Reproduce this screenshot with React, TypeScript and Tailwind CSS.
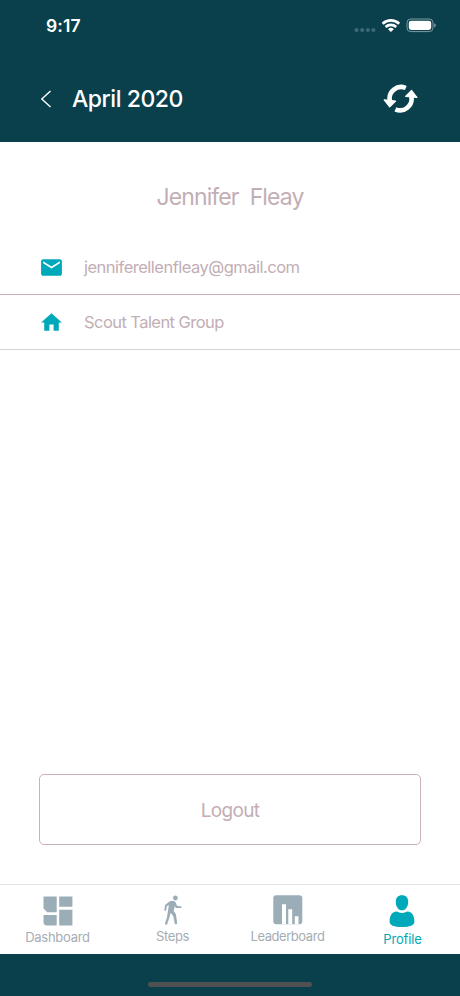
import { MdEmail, MdHome } from "react-icons/md";

function StatusIcons() {
    return (
        <svg width="84" height="20" viewBox="0 0 84 20" fill="none">
            <g fill="#3b6975">
                <circle cx="4.5" cy="14" r="2.1" />
                <circle cx="10.2" cy="14" r="2.1" />
                <circle cx="15.9" cy="14" r="2.1" />
                <circle cx="21.4" cy="14" r="2.1" />
            </g>
            <g stroke="#fff" strokeWidth="2.7">
                <path d="M30.6 7.7a12.2 12.2 0 0 1 16.6 0" />
                <path d="M33.6 11a7.8 7.8 0 0 1 10.6 0" />
            </g>
            <path fill="#fff" d="M36 13.2a4.2 4.2 0 0 1 5.8 0l-2.9 2.9z" />
            <rect x="55" y="3" width="26" height="12.6" rx="3.8" stroke="#7f9ba3" />
            <rect x="56.8" y="4.7" width="22.4" height="9.2" rx="2.3" fill="#fff" />
            <path fill="#7f9ba3" d="M82.2 7.2q1.6.6 1.6 2.1t-1.6 2.1z" />
        </svg>
    );
}

function SyncIcon() {
    return (
        <svg width="36" height="30" viewBox="0 0 36 30" fill="none">
            <g stroke="#fff" strokeWidth="4.6">
                <path d="M22.8 4A11.5 11.5 0 0 0 6.9 17" />
                <path d="M12.4 25.3A11.5 11.5 0 0 0 28.3 12.3" />
            </g>
            <g fill="#fff" stroke="#fff" strokeWidth="1.2" strokeLinejoin="round">
                <path d="M1.2 15.8l11.4 1.2-5.9 5.9z" />
                <path d="M34 13.5l-11.4-1.2 5.9-5.9z" />
            </g>
        </svg>
    );
}

function DashboardIcon() {
    return (
        <svg width="30" height="30" viewBox="0 0 30 30" fill="#9badb7">
            <path d="M.5.500h13.200v15.700H4.200L.5 12.500zM16.200.5h13.200v10.300H16.200zM.5 19h13.200v10.400H3.800Q.5 29.400.5 26zM16.200 13.700h13.200v15.700H16.200z" />
        </svg>
    );
}

function StepsIcon() {
    return (
        <svg width="18" height="30" viewBox="0 0 18 30" fill="#9badb7">
            <circle cx="11.4" cy="3" r="2.4" />
            <path d="M5.5 6.5q2.6-1.3 4.9-.3 1 .5 1.5 1.8l1.2 3 4 .3q.7.8 0 1.7l-5.2-.1-1.2-2-1 5.200 2.200 3.100 1.300 9-.7 1.100q-1.400.3-1.800-.8l-1.500-7.600-2.600-3.100-1 4.200-2.400 7.300q-1.200.9-2.300-.2l.2-1.200 1.900-5.700 1.500-9.800.2-2.500-1.900 1.400-.7 4.100q-1.100.7-1.800-.2L1.100 10z" />
        </svg>
    );
}

function LeaderboardIcon() {
    return (
        <svg width="30" height="30" viewBox="0 0 30 30">
            <rect x=".3" y=".3" width="29" height="29" rx="3" fill="#9badb7" />
            <path fill="#fff" d="M9 9.3h4v20H9zM15.3 14.3h3.900v15h-3.900zM21.800 21.300h3.700v8h-3.700z" />
        </svg>
    );
}

function ProfileIcon() {
    return (
        <svg width="27" height="33" viewBox="0 0 27 33" fill="#00a9ba">
            <path d="M13 .2c4.1 0 6.300 2.700 6.200 6.700 0 4.400-2.500 8.400-6.200 8.400S6.800 11.300 6.800 6.900C6.700 2.900 8.900.2 13 .2z" />
            <path d="M6.900 16.600c1.800-.3 2.900 1.400 6.100 1.400s4.300-1.700 6.100-1.400c4.700.8 6.300 5 6.300 10.200 0 3.400-4.700 5.300-12.400 5.300S.6 30.200.6 26.800c0-5.200 1.600-9.400 6.300-10.200z" />
        </svg>
    );
}

function App() {
    const details = [
        { text: "jenniferellenfleay@gmail.com", icon: <MdEmail size={25} />, style: "border-[#cbb0b7] tracking-[-0.51px]" },
        { text: "Scout Talent Group", icon: <MdHome size={25} />, style: "border-[#d8d0d3] tracking-[-0.56px]" },
    ];

    const tabs = [
        { label: "Dashboard", icon: <DashboardIcon />, style: "pt-[11px] text-[#a5adb3] tracking-[-0.28px]" },
        { label: "Steps", icon: <StepsIcon />, style: "pt-[10px] text-[#a5adb3] tracking-[-0.4px]" },
        { label: "Leaderboard", icon: <LeaderboardIcon />, style: "pt-[10px] text-[#a5adb3] tracking-[-0.45px]" },
        { label: "Profile", icon: <ProfileIcon />, style: "pt-[10px] text-[#00a9ba] tracking-[-0.15px]" },
    ];

    return (
        <div className="flex h-[996px] w-[460px] flex-col overflow-hidden bg-white font-['Inter',sans-serif]">
            <header className="h-[142px] bg-[#09404c] text-white">
                <div className="flex h-[52px] items-center justify-between pl-[46px] pr-[24px]">
                    <span className="text-[17.5px] font-semibold tracking-[0.1px]">9:17</span>
                    <StatusIcons />
                </div>
                <div className="flex h-[93px] items-center pl-[40px] pr-[41px]">
                    <svg width="12" height="18" viewBox="0 0 12 18" fill="none" stroke="#fff" strokeWidth="1.4">
                        <path d="M10.5 1L1.8 9l8.7 8" />
                    </svg>
                    <h1 className="ml-[20px] flex-1 pt-[2px] text-[23px] font-medium tracking-[-0.45px]">April 2020</h1>
                    <SyncIcon />
                </div>
            </header>

            <main className="flex flex-1 flex-col text-[#c2aeb4]">
                <h2 className="flex h-[98px] items-center justify-center pt-[13px] text-[23px] tracking-[-0.9px]">
                    Jennifer&nbsp; Fleay
                </h2>
                {details.map((item) => (
                    <div key={item.text} className={`flex h-[55px] items-center border-b pl-[39px] text-[16.5px] ${item.style}`}>
                        <span className="text-[#00a9ba]">{item.icon}</span>
                        <span className="ml-[20px] pt-px">{item.text}</span>
                    </div>
                ))}
                <button className="mx-[39px] mb-[39px] mt-auto h-[71px] rounded-[5px] border border-[#cbb0b7] pt-[3px] text-[19px] tracking-[-0.7px]">
                    Logout
                </button>
            </main>

            <nav className="grid h-[70px] grid-cols-4 border-t border-[#e4e5e6]">
                {tabs.map((tab) => (
                    <div key={tab.label} className={`flex flex-col items-center text-[13px] ${tab.style}`}>
                        {tab.icon}
                        <span className="mt-[1.5px] leading-[18px]">{tab.label}</span>
                    </div>
                ))}
            </nav>
            <footer className="flex h-[42px] justify-center bg-[#09404c] pt-[28px]">
                <div className="h-[5px] w-[164px] rounded-full bg-[#505052]" />
            </footer>
        </div>
    );
}

export default App;
